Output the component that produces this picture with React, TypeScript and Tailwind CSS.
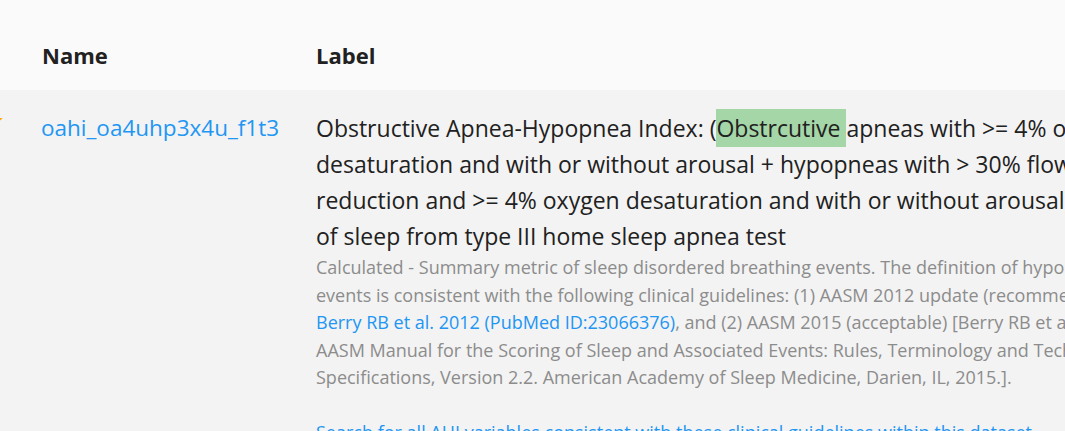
import React from "react";

const font = { fontFamily: '"Open Sans", "Noto Sans", sans-serif' };

function Star() {
  return (
    <svg width="16" height="16" viewBox="0 0 24 24" className="-ml-[12px] mt-[2px] shrink-0">
      <path
        d="M12 2l2.9 6.6 7.1.6-5.4 4.7 1.6 7-6.2-3.7-6.2 3.7 1.6-7L2 9.2l7.1-.6z"
        fill="#ffa000"
      />
    </svg>
  );
}

export default function App() {
  return (
    <div className="w-[1065px] h-[431px] overflow-hidden bg-[#f3f3f3]" style={font}>
      <div className="h-[90px] pt-[20px] bg-[#fafafa] flex items-center text-[#212121] text-[22px] font-bold">
        <div className="w-[316px] pl-[42px]">Name</div>
        <div>Label</div>
      </div>
      <div className="flex pt-[20px]">
        <div className="w-[316px] flex items-start">
          <Star />
          <a className="ml-[37px] text-[#2196f3] text-[22.5px] leading-[36px]">oahi_oa4uhp3x4u_f1t3</a>
        </div>
        <div className="flex-1 min-w-0 whitespace-nowrap">
          <div className="text-[#212121] text-[23px] leading-[36px]">
            <div>
              Obstructive Apnea-Hypopnea Index: (
              <span className="bg-[#a5d6a7] py-[3px]">Obstrcutive </span>
              apneas with &gt;= 4% oxygen
            </div>
            <div>desaturation and with or without arousal + hypopneas with &gt; 30% flow</div>
            <div>reduction and &gt;= 4% oxygen desaturation and with or without arousal) per hour</div>
            <div>of sleep from type III home sleep apnea test</div>
          </div>
          <div className="text-[#8c8c8c] text-[18px] leading-[27.5px]">
            <div>Calculated - Summary metric of sleep disordered breathing events. The definition of hypopnea</div>
            <div>events is consistent with the following clinical guidelines: (1) AASM 2012 update (recommended) [</div>
            <div>
              <a className="text-[#2196f3]">Berry RB et al. 2012 (PubMed ID:23066376)</a>, and (2) AASM 2015
              (acceptable) [Berry RB et al. The
            </div>
            <div>AASM Manual for the Scoring of Sleep and Associated Events: Rules, Terminology and Technical</div>
            <div>Specifications, Version 2.2. American Academy of Sleep Medicine, Darien, IL, 2015.].</div>
            <div className="h-[27.5px]" />
            <div>
              <a className="text-[#2196f3]">
                Search for all AHI variables consistent with these clinical guidelines within this dataset
              </a>
            </div>
          </div>
        </div>
      </div>
    </div>
  );
}
